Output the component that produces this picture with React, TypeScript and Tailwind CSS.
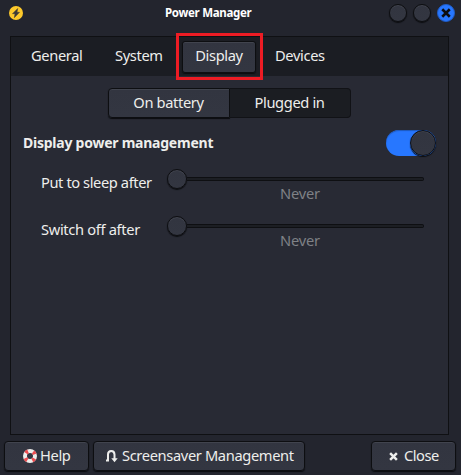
import type { ReactNode } from "react";

const raised =
  "border border-[#0d0e11] bg-gradient-to-b from-[#323540] to-[#333641] shadow-[inset_0_1px_0_#41444e,0_1px_1px_#0b0c0f]";

function Knob({ size }: { size: string }) {
  return <span className={`block shrink-0 rounded-full ${size} ${raised}`} />;
}

function Tab({ children, className }: { children: ReactNode; className: string }) {
  return (
    <button className={`flex h-8 items-center whitespace-nowrap rounded-[3px] pb-1 ${className}`}>{children}</button>
  );
}

function SliderRow({ label, spacing }: { label: string; spacing: string }) {
  return (
    <div className="flex h-[47px]">
      <span className={`w-[126px] whitespace-nowrap pt-[3px] leading-5 ${spacing}`}>{label}</span>
      <div className="w-[257px]">
        <div className="flex h-5 items-center">
          <Knob size="size-5" />
          <div className="h-1 flex-1 rounded-r-sm border border-l-0 border-[#0e0f12] bg-[#1c1e23]" />
        </div>
        <div className="-mt-[6px] pl-[9px] text-center leading-5 tracking-[-0.2px] text-[#7f8186]">Never</div>
      </div>
    </div>
  );
}

function LifeBuoy() {
  return (
    <svg width="14" height="14" viewBox="0 0 14 14" fill="none">
      <circle cx="7" cy="7" r="5" stroke="#eeeeec" strokeWidth="4" />
      <circle cx="7" cy="7" r="5" stroke="#ed4c50" strokeWidth="4" strokeDasharray="2.6 5.254" strokeDashoffset="-2.627" />
    </svg>
  );
}

function Cross({ size, color, weight }: { size: number; color: string; weight: number }) {
  return (
    <svg width={size} height={size} viewBox="0 0 8 8">
      <path d="M1 1 7 7M7 1 1 7" stroke={color} strokeWidth={weight} />
    </svg>
  );
}

export default function App() {
  return (
    <div className="flex h-[475px] w-[461px] flex-col overflow-hidden bg-[#23252e] font-['Noto_Sans','Open_Sans',sans-serif] text-[14.67px] tracking-[-0.36px] text-[#eeeeec]">
      <header className="flex h-9 shrink-0 items-start pl-[9px] pr-[6px]">
        <svg className="mt-[6px]" width="14" height="14" viewBox="0 0 14 14">
          <circle cx="7" cy="7" r="7" fill="#fdc92b" />
          <path d="M8.7 2.5 3.5 7.7H6L5.3 11.7 10.5 6.3H8Z" fill="#3d3b38" stroke="#3d3b38" strokeWidth="0.5" />
        </svg>
        <h1 className="ml-[142px] mt-[3px] whitespace-nowrap text-[11.5px] font-bold leading-5 tracking-[-0.3px] text-white">
          Power Manager
        </h1>
        <div className="ml-auto mt-1 flex gap-[6px]">
          <Knob size="size-[18px]" />
          <Knob size="size-[18px]" />
          <button className="flex size-[18px] items-center justify-center rounded-full border border-[#205bc4] bg-[#2777ff]">
            <Cross size={10} color="#0c0d10" weight={2.1} />
          </button>
        </div>
      </header>

      <main className="mx-[10px] mr-3 flex h-[399px] shrink-0 flex-col border border-[#0f1013] bg-[#282a34]">
        <nav className="flex h-[39px] shrink-0 items-start bg-[#1b1d23] pl-5 pt-1">
          <Tab className="w-[84px]">General</Tab>
          <Tab className="w-[67px]">System</Tab>
          <div className="relative">
            <Tab className={`w-[74px] justify-center ${raised}`}>Display</Tab>
            <div className="pointer-events-none absolute -left-[6px] -top-2 h-[47px] w-[87px] border-[3px] border-[#ed1c24]" />
          </div>
          <Tab className="ml-[19px]">Devices</Tab>
        </nav>

        <div className="mt-3 flex h-[30px] justify-center pr-px">
          <button className={`w-[122px] rounded-l-[4px] pb-[2px] ${raised}`}>On battery</button>
          <button className="w-[121px] rounded-r-[4px] border border-l-0 border-[#111216] bg-[#1b1d22] pb-[2px]">
            Plugged in
          </button>
        </div>

        <div className="mt-3 flex h-[26px] items-center justify-between pl-3 pr-3">
          <h2 className="whitespace-nowrap pb-[2px] text-[14px] font-bold tracking-[-0.24px]">
            Display power management
          </h2>
          <div className="flex h-[26px] w-[50px] justify-end rounded-full bg-[#2777ff] shadow-[inset_0_1px_1px_#1d58bd]">
            <Knob size="size-[26px]" />
          </div>
        </div>

        <div className="mt-[13px] pl-[30px]">
          <SliderRow label="Put to sleep after" spacing="tracking-[-0.41px]" />
          <SliderRow label="Switch off after" spacing="tracking-[-0.33px]" />
        </div>
      </main>

      <footer className="flex items-start pl-1 pr-[5px] pt-[6px]">
        <button className={`flex h-[30px] w-[85px] items-center gap-[3px] rounded-[4px] pl-[18px] ${raised}`}>
          <LifeBuoy />
          <span className="pb-[2px]">Help</span>
        </button>
        <button className={`ml-1 flex h-[30px] w-[212px] items-center gap-1 whitespace-nowrap rounded-[4px] pl-[11px] ${raised}`}>
          <svg width="13" height="14" viewBox="0 0 13 14">
            <path d="M1 11.5H3V5.5Q3 2 6.2 2T9.5 5.5V10" fill="none" stroke="#eeeeec" strokeWidth="2" />
            <path d="M6.3 9.3H12.7L9.5 13.3Z" fill="#eeeeec" />
          </svg>
          <span className="pb-[2px]">Screensaver Management</span>
        </button>
        <button className={`ml-auto flex h-[30px] w-[85px] items-center gap-[6px] rounded-[4px] pl-[17px] ${raised}`}>
          <Cross size={9} color="#eeeeec" weight={2.2} />
          <span className="pb-[2px] tracking-[-0.5px]">Close</span>
        </button>
      </footer>
    </div>
  );
}
